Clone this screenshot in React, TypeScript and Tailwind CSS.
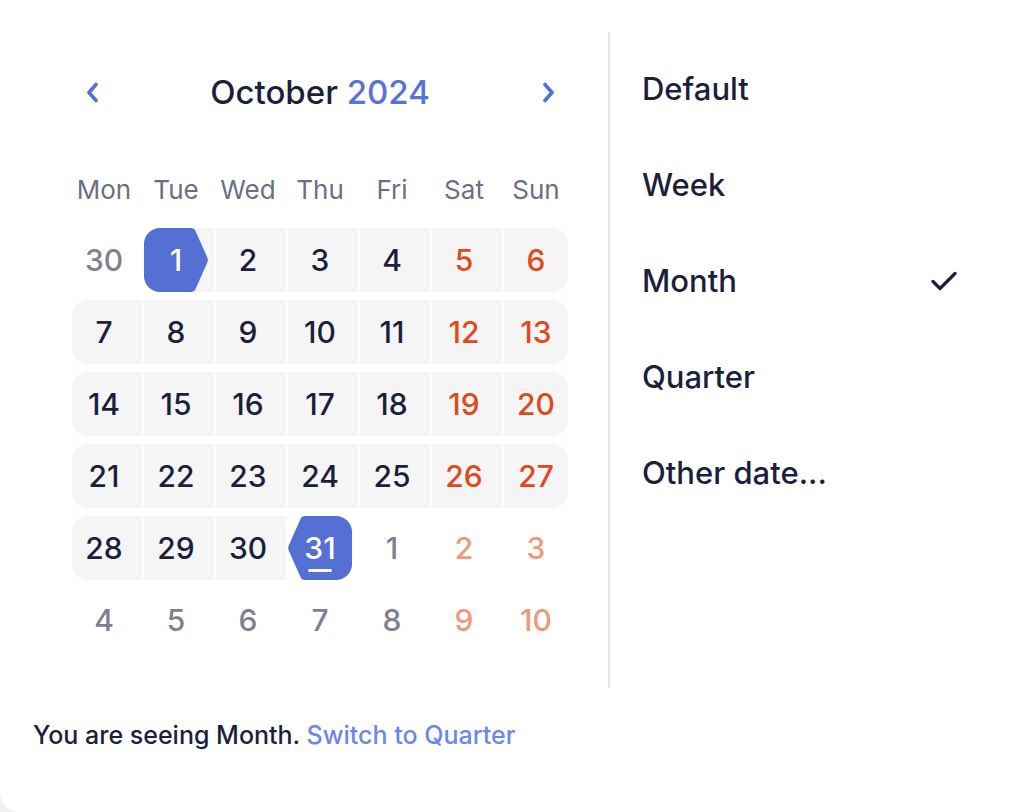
import React from 'react';

type Kind = 'out' | 'in' | 'start' | 'end';
type Tone = 'dark' | 'muted' | 'red' | 'faded';
interface Day {
  n: number;
  kind: Kind;
  tone: Tone;
}

const d = (n: number, kind: Kind, tone: Tone): Day => ({ n, kind, tone });

const rows: Day[][] = [
  [d(30, 'out', 'muted'), d(1, 'start', 'dark'), d(2, 'in', 'dark'), d(3, 'in', 'dark'), d(4, 'in', 'dark'), d(5, 'in', 'red'), d(6, 'in', 'red')],
  [d(7, 'in', 'dark'), d(8, 'in', 'dark'), d(9, 'in', 'dark'), d(10, 'in', 'dark'), d(11, 'in', 'dark'), d(12, 'in', 'red'), d(13, 'in', 'red')],
  [d(14, 'in', 'dark'), d(15, 'in', 'dark'), d(16, 'in', 'dark'), d(17, 'in', 'dark'), d(18, 'in', 'dark'), d(19, 'in', 'red'), d(20, 'in', 'red')],
  [d(21, 'in', 'dark'), d(22, 'in', 'dark'), d(23, 'in', 'dark'), d(24, 'in', 'dark'), d(25, 'in', 'dark'), d(26, 'in', 'red'), d(27, 'in', 'red')],
  [d(28, 'in', 'dark'), d(29, 'in', 'dark'), d(30, 'in', 'dark'), d(31, 'end', 'dark'), d(1, 'out', 'muted'), d(2, 'out', 'faded'), d(3, 'out', 'faded')],
  [d(4, 'out', 'muted'), d(5, 'out', 'muted'), d(6, 'out', 'muted'), d(7, 'out', 'muted'), d(8, 'out', 'muted'), d(9, 'out', 'faded'), d(10, 'out', 'faded')],
];

const weekdays = ['Mon', 'Tue', 'Wed', 'Thu', 'Fri', 'Sat', 'Sun'];

const toneClass: Record<Tone, string> = {
  dark: 'text-[#1c1f3c]',
  muted: 'text-[#7e8090]',
  red: 'text-[#e1481b]',
  faded: 'text-[#ee987c]',
};

const SHAPE =
  'M16 0H47C49 0 50.5 1 51.4 2.8L63.2 29.2C64 31 64 33 63.2 34.8L51.4 61.2C50.5 63 49 64 47 64H16A16 16 0 0 1 0 48V16A16 16 0 0 1 16 0Z';

function Cell({ day, col }: { day: Day; col: number }) {
  const last = col === 6;
  const hasBg = day.kind === 'in' || day.kind === 'start';
  const outer = last ? 'w-[64px]' : 'w-[72px]';
  const bgW = last ? 'w-[64px]' : 'w-[70px]';
  const rl = col === 0 || day.kind === 'start' ? 'rounded-l-[16px]' : '';
  const rr = last ? 'rounded-r-[16px]' : '';
  const sel = day.kind === 'start' || day.kind === 'end';
  return (
    <div className={`${outer} h-[64px] shrink-0`}>
      <div className={`relative h-full ${bgW} ${hasBg ? 'bg-[#f5f5f5]' : ''} ${rl} ${rr}`}>
        {sel && (
          <svg
            className="absolute left-0 top-0"
            width="64"
            height="64"
            viewBox="0 0 64 64"
          >
            <path
              d={SHAPE}
              fill="#5470d4"
              transform={day.kind === 'end' ? 'translate(64 0) scale(-1 1)' : undefined}
            />
          </svg>
        )}
        <span
          className={`relative flex h-full w-[64px] items-center justify-center text-[30px] font-medium ${
            sel ? 'text-white' : toneClass[day.tone]
          }`}
        >
          {day.n}
        </span>
        {day.kind === 'end' && (
          <span className="absolute left-[20px] top-[53px] h-[3px] w-[24px] rounded-full bg-white" />
        )}
      </div>
    </div>
  );
}

function Chevron({ dir }: { dir: 'left' | 'right' }) {
  return (
    <svg width="13" height="21" viewBox="0 0 13 21" fill="none">
      <path
        d={dir === 'left' ? 'M10 2.5L3 10.5L10 18.5' : 'M3 2.5L10 10.5L3 18.5'}
        stroke="#5470d4"
        strokeWidth="3.6"
        strokeLinecap="round"
        strokeLinejoin="round"
      />
    </svg>
  );
}

const options = ['Default', 'Week', 'Month', 'Quarter', 'Other date...'];

export default function App() {
  return (
    <div className="h-[812px] w-[1024px] overflow-hidden bg-[#f1f1f1] font-['Inter',sans-serif]">
      <div className="flex h-full w-full flex-col rounded-bl-[20px] bg-white">
        <div className="flex pt-[32px]">
          <div className="w-[608px] shrink-0 pb-[36px] pl-[72px] pt-[40px]">
            <div className="flex h-[40px] w-[496px] items-center justify-between">
              <div className="flex h-[40px] w-[40px] items-center justify-center">
                <Chevron dir="left" />
              </div>
              <div className="text-[33px] font-medium leading-[40px] text-[#1c1f3c]">
                October <span className="text-[#5872d8]">2024</span>
              </div>
              <div className="flex h-[40px] w-[40px] items-center justify-center">
                <Chevron dir="right" />
              </div>
            </div>
            <div className="mt-[57px] flex h-[40px] items-center">
              {weekdays.map((w, i) => (
                <div key={w} className={`${i === 6 ? 'w-[64px]' : 'w-[72px]'} shrink-0`}>
                  <div className="w-[64px] text-center text-[26px] text-[#6c6f82]">{w}</div>
                </div>
              ))}
            </div>
            <div className="mt-[19px] flex flex-col gap-[8px]">
              {rows.map((r, ri) => (
                <div key={ri} className="flex w-[496px]">
                  {r.map((day, ci) => (
                    <Cell key={ci} day={day} col={ci} />
                  ))}
                </div>
              ))}
            </div>
          </div>
          <div className="w-[2px] shrink-0 bg-[#e6e6e6]" />
          <div className="flex flex-col pl-[32px] pt-[9px]">
            {options.map((o) => (
              <div key={o} className="flex h-[96px] w-[315px] items-center justify-between">
                <span className="text-[31px] font-medium text-[#1c1f3c]">{o}</span>
                {o === 'Month' && (
                  <svg width="26" height="20" viewBox="0 0 26 20" fill="none">
                    <path
                      d="M2 10.5L9 17.5L24 2.5"
                      stroke="#1c1f3c"
                      strokeWidth="3.2"
                      strokeLinecap="round"
                      strokeLinejoin="round"
                    />
                  </svg>
                )}
              </div>
            ))}
          </div>
        </div>
        <div className="mt-[29px] pl-[33px] text-[25px] font-medium leading-[36px] text-[#1c1f3c]">
          You are seeing Month. <span className="text-[#6b88e8]">Switch to Quarter</span>
        </div>
      </div>
    </div>
  );
}
